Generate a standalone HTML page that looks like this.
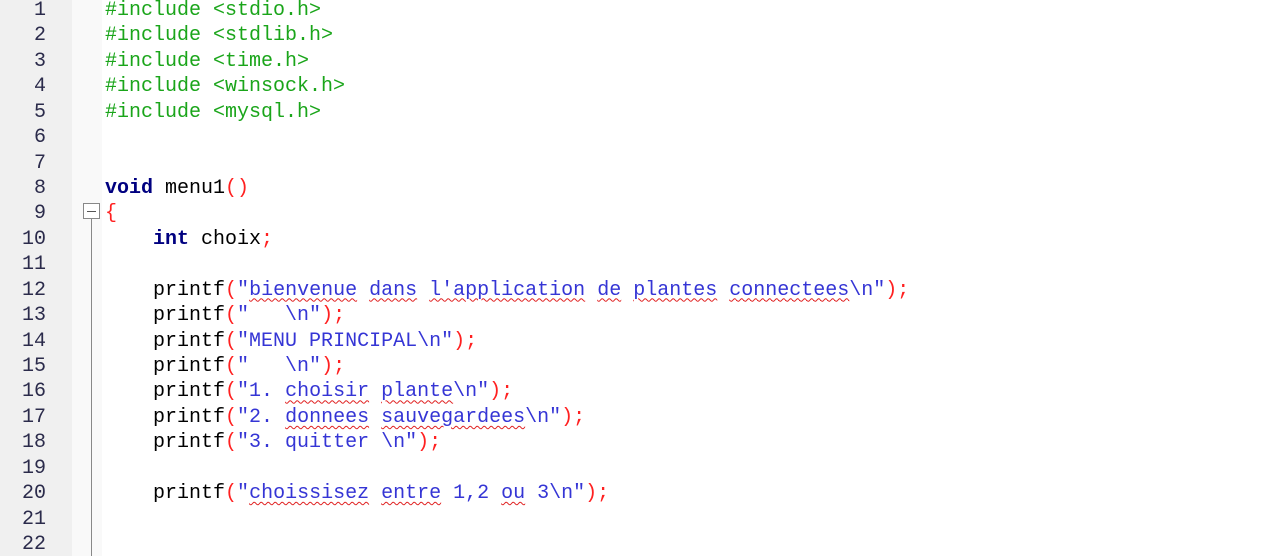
<!DOCTYPE html>
<html><head><style>
body{margin:0;width:1267px;height:556px;overflow:hidden;background:#fff;position:relative;font-family:"Liberation Mono","Courier New",monospace;font-size:20px;}
#ln{position:absolute;left:0;top:0;width:72px;height:556px;background:#f0f0f0;}
#fm{position:absolute;left:72px;top:0;width:30px;height:556px;background:#f9f9f9;}
.l{position:absolute;left:0;height:25.43px;line-height:25.43px;white-space:pre;}
.n{width:46px;text-align:right;color:#2b2b4b;}
.c{left:105px;color:#000;}
.g{color:#1aa51a}.k{color:#000080;font-weight:bold}.s{color:#3535d5}.r{color:#ff2020}
.w{text-decoration:underline wavy #e02020;text-decoration-thickness:1px;text-underline-offset:3px}
#box{position:absolute;left:83px;top:203px;width:17px;height:16px;border:1px solid #888;background:#fff;box-sizing:border-box;}
#box:after{content:"";position:absolute;left:3px;top:7px;width:9px;height:1px;background:#555;}
#vl{position:absolute;left:91px;top:219px;width:1px;height:337px;background:#888;}
#w{position:absolute;left:0;top:1px;width:1267px;height:556px;}
</style></head><body>
<div id="ln"></div><div id="fm"></div><div id="box"></div><div id="vl"></div>
<div id="w">
<div class="l n" style="top:-3px">1</div>
<div class="l n" style="top:22.4px">2</div>
<div class="l n" style="top:47.9px">3</div>
<div class="l n" style="top:73.3px">4</div>
<div class="l n" style="top:98.7px">5</div>
<div class="l n" style="top:124.2px">6</div>
<div class="l n" style="top:149.6px">7</div>
<div class="l n" style="top:175px">8</div>
<div class="l n" style="top:200.4px">9</div>
<div class="l n" style="top:225.9px">10</div>
<div class="l n" style="top:251.3px">11</div>
<div class="l n" style="top:276.7px">12</div>
<div class="l n" style="top:302.2px">13</div>
<div class="l n" style="top:327.6px">14</div>
<div class="l n" style="top:353px">15</div>
<div class="l n" style="top:378.4px">16</div>
<div class="l n" style="top:403.9px">17</div>
<div class="l n" style="top:429.3px">18</div>
<div class="l n" style="top:454.7px">19</div>
<div class="l n" style="top:480.2px">20</div>
<div class="l n" style="top:505.6px">21</div>
<div class="l n" style="top:531px">22</div>

<div class="l c g" style="top:-3px">#include &lt;stdio.h&gt;</div>
<div class="l c g" style="top:22.4px">#include &lt;stdlib.h&gt;</div>
<div class="l c g" style="top:47.9px">#include &lt;time.h&gt;</div>
<div class="l c g" style="top:73.3px">#include &lt;winsock.h&gt;</div>
<div class="l c g" style="top:98.7px">#include &lt;mysql.h&gt;</div>
<div class="l c" style="top:175px"><span class="k">void</span> menu1<span class="r">()</span></div>
<div class="l c r" style="top:200.4px">{</div>
<div class="l c" style="top:225.9px">    <span class="k">int</span> choix<span class="r">;</span></div>
<div class="l c" style="top:276.7px">    printf<span class="r">(</span><span class="s">"<span class="w">bienvenue</span> <span class="w">dans</span> <span class="w">l'application</span> <span class="w">de</span> <span class="w">plantes</span> <span class="w">connectees</span>\n"</span><span class="r">);</span></div>
<div class="l c" style="top:302.2px">    printf<span class="r">(</span><span class="s">"   \n"</span><span class="r">);</span></div>
<div class="l c" style="top:327.6px">    printf<span class="r">(</span><span class="s">"MENU PRINCIPAL\n"</span><span class="r">);</span></div>
<div class="l c" style="top:353px">    printf<span class="r">(</span><span class="s">"   \n"</span><span class="r">);</span></div>
<div class="l c" style="top:378.4px">    printf<span class="r">(</span><span class="s">"1. <span class="w">choisir</span> <span class="w">plante</span>\n"</span><span class="r">);</span></div>
<div class="l c" style="top:403.9px">    printf<span class="r">(</span><span class="s">"2. <span class="w">donnees</span> <span class="w">sauvegardees</span>\n"</span><span class="r">);</span></div>
<div class="l c" style="top:429.3px">    printf<span class="r">(</span><span class="s">"3. quitter \n"</span><span class="r">);</span></div>
<div class="l c" style="top:480.2px">    printf<span class="r">(</span><span class="s">"<span class="w">choissisez</span> <span class="w">entre</span> 1,2 <span class="w">ou</span> 3\n"</span><span class="r">);</span></div>
</div>
</body></html>
